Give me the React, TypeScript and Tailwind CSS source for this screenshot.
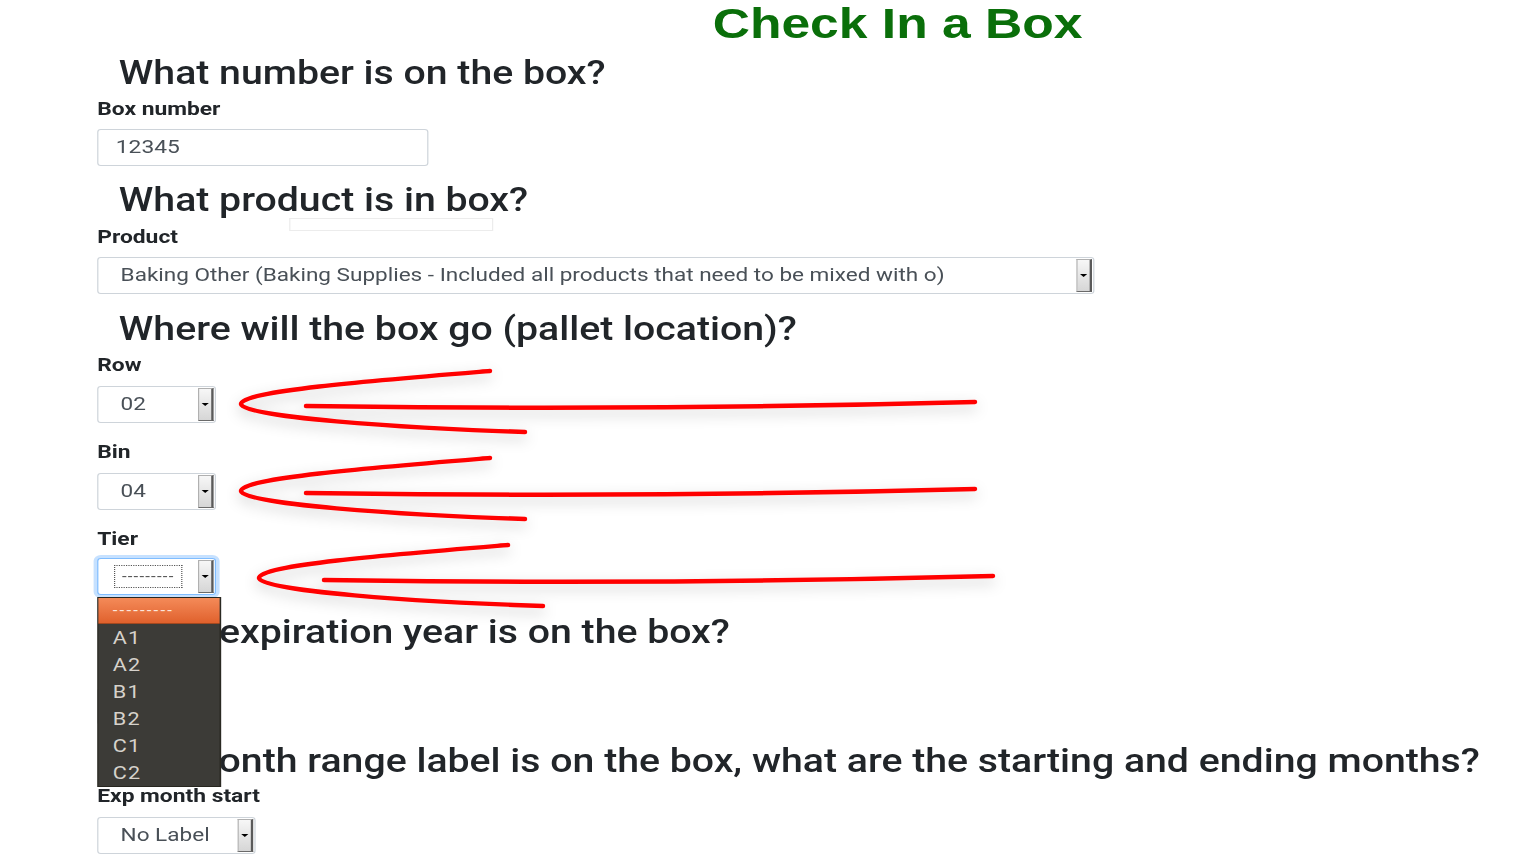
import React from "react";

const heading =
  "mt-[16px] whitespace-nowrap pl-[18px] text-[32.7px] font-medium leading-[38px] text-[#212529]";
const label = "whitespace-nowrap text-[19px] font-bold leading-[24px] text-[#212529]";

function Arrow() {
  return (
    <div className="my-[1px] mr-[1px] ml-auto flex w-[13px] shrink-0 items-center justify-center border border-[#b0b0b0] border-r-[2px] border-r-[#5a5a5a] border-b-[#6a6a6a] bg-gradient-to-b from-[#f7f7f7] to-[#d6d6d6]">
      <span className="h-0 w-0 border-x-[3px] border-t-[3px] border-x-transparent border-t-black" />
    </div>
  );
}

function Select({ value, className }: { value: string; className: string }) {
  return (
    <div
      className={`flex h-[37px] items-stretch rounded-[3px] border border-[#ced4da] bg-white ${className}`}
    >
      <div className="flex items-center overflow-hidden whitespace-nowrap pl-[18.5px] text-[18.8px] text-[#495057]">
        {value}
      </div>
      <Arrow />
    </div>
  );
}

function TierSelect() {
  const options = ["A1", "A2", "B1", "B2", "C1", "C2"];
  return (
    <div className="relative mt-[7px] w-[99px]">
      <div className="flex h-[37px] items-stretch rounded-[3px] border border-[#80bdff] bg-white shadow-[0_0_0_3px_rgba(128,189,255,0.45)]">
        <div className="my-[6px] ml-[13px] flex w-[57px] items-center justify-center border border-dotted border-[#555] text-[14px] tracking-[1px] text-[#555]">
          ---------
        </div>
        <Arrow />
      </div>
      {/* open option list */}
      <div className="absolute top-[39px] left-0 z-10 w-[103px] border border-[#27261f] bg-[#3c3b37]">
        <div className="flex h-[26px] items-center border-b border-[#a4481f] bg-gradient-to-b from-[#f48a58] to-[#e0612c] pl-[12px] text-[14px] tracking-[1.8px] text-[#fbe6dc]">
          ---------
        </div>
        {options.map((o) => (
          <div key={o} className="flex h-[27px] items-center pl-[12px] text-[18px] tracking-[1px] text-[#d6d2cb]">
            {o}
          </div>
        ))}
      </div>
    </div>
  );
}

function Scribble({ dx, dy }: { dx: number; dy: number }) {
  return (
    <g transform={`translate(${dx} ${dy})`} filter="url(#shade)">
      <path
        d="M490 371 C 380 380 240 391 241 404 C 242 417 400 428 525 432"
        fill="none"
        stroke="#ff0000"
        strokeWidth="4.5"
        strokeLinecap="round"
      />
      <path
        d="M306 406 Q 640 411 975 402"
        fill="none"
        stroke="#ff0000"
        strokeWidth="4.5"
        strokeLinecap="round"
      />
    </g>
  );
}

export default function App() {
  return (
    <div className="relative h-[862px] w-[1536px] overflow-hidden bg-white font-['Roboto',sans-serif]">
      <div className="w-[1280px] origin-top-left scale-x-[1.2] pl-[81px]">
        <div className="-ml-[81px] w-[1496px] text-center font-['Liberation_Sans',Arial,sans-serif] text-[43px] font-bold leading-[46px] text-[#0a6f0a]">
          Check In a Box
        </div>

        <div className={`${heading} !mt-[8px]`}>What number is on the box?</div>
        <div className={`${label} mt-[5px]`}>Box number</div>
        <div className="mt-[8px] flex h-[37px] w-[276px] items-center rounded-[3px] border border-[#ced4da] pl-[14.5px] text-[19px] text-[#495057]">
          12345
        </div>

        <div className="relative">
          <div className={`${heading} !mt-[15px]`}>What product is in box?</div>
          <div className="absolute top-[37px] left-[160px] h-[13px] w-[170px] border border-[#ececec]" />
        </div>
        <div className={`${label} mt-[6px]`}>Product</div>
        <Select
          value="Baking Other (Baking Supplies - Included all products that need to be mixed with o)"
          className="mt-[8px] w-[831px]"
        />

        <div className={heading}>Where will the box go (pallet location)?</div>
        <div className={`${label} mt-[5px]`}>Row</div>
        <Select value="02" className="mt-[9px] w-[99px]" />
        <div className={`${label} mt-[17px]`}>Bin</div>
        <Select value="04" className="mt-[9px] w-[99px]" />
        <div className={`${label} mt-[17px]`}>Tier</div>
        <TierSelect />

        <div className={`${heading} !mt-[18px]`}>What expiration year is on the box?</div>
        <div className={`${label} mt-[5px]`}>Exp year</div>
        <Select value="2020" className="mt-[8px] w-[99px]" />

        <div className={`${heading} !mt-[17px]`}>
          If a month range label is on the box, what are the starting and ending months?
        </div>
        <div className={`${label} mt-[4px]`}>Exp month start</div>
        <Select value="No Label" className="mt-[9px] w-[132px]" />
      </div>

      <svg className="pointer-events-none absolute inset-0" width="1536" height="862">
        <defs>
          <filter id="shade" x="-20%" y="-200%" width="140%" height="500%">
            <feDropShadow dx="0" dy="5" stdDeviation="7" floodColor="#000" floodOpacity="0.22" />
          </filter>
        </defs>
        <Scribble dx={0} dy={0} />
        <Scribble dx={0} dy={87} />
        <Scribble dx={18} dy={174} />
      </svg>
    </div>
  );
}
